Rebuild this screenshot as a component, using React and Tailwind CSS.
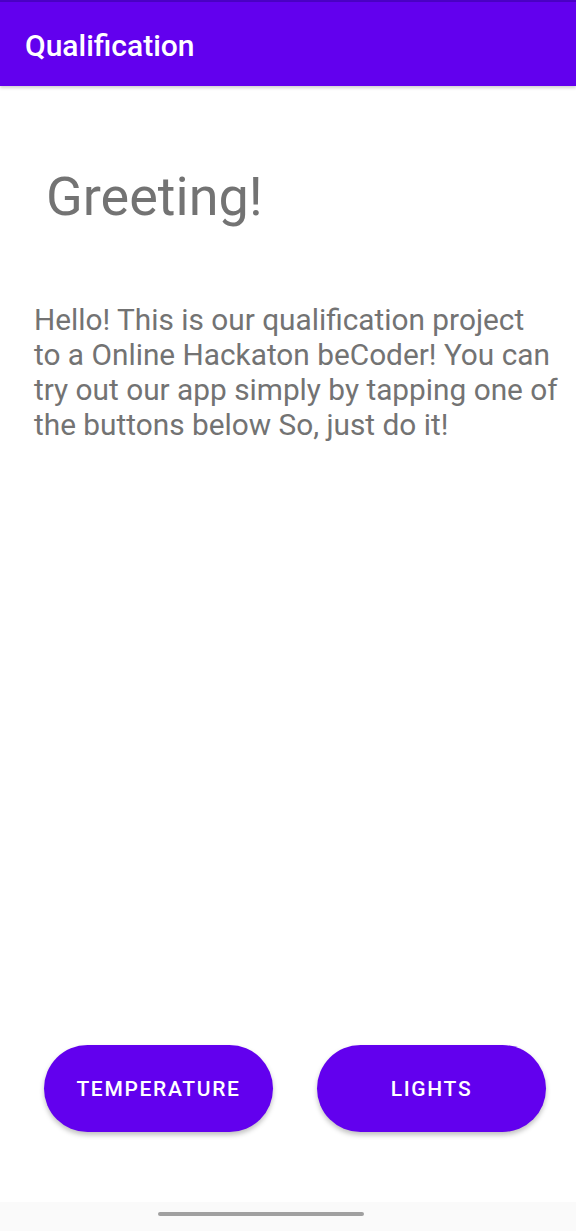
// Qualification app — greeting screen with two action buttons.

export default function App() {
  return (
    <div
      className="flex flex-col h-[1231px] w-full bg-white"
      style={{ fontFamily: 'Roboto, "Liberation Sans", sans-serif' }}
    >
      <div className="h-[2px] bg-[#4a00c4]" />
      <header className="h-[84px] bg-[#6200ee] flex items-center px-[25px] shadow-[0_2px_3px_rgba(0,0,0,0.18)] relative z-10">
        <h1 className="text-white text-[30px] font-medium leading-none mt-[3px]">Qualification</h1>
      </header>

      <main className="flex-1 flex flex-col">
        <h2 className="mt-[84px] ml-[46px] text-[54px] leading-none text-[#737373]">Greeting!</h2>
        <p className="mt-[78px] ml-[34px] text-[29.8px] leading-[35px] text-[#737373] whitespace-nowrap">
          Hello! This is our qualification project
          <br />
          to a Online Hackaton beCoder! You can
          <br />
          try out our app simply by tapping one of
          <br />
          the buttons below So, just do it!
        </p>

        <div className="flex-1" />

        <div className="flex justify-between pl-[44px] pr-[30px] mb-[70px]">
          <button className="w-[229px] h-[87px] rounded-full bg-[#6200ee] text-white text-[21px] font-medium tracking-[0.08em] pt-[3px] shadow-[0_3px_5px_rgba(0,0,0,0.25)]">
            TEMPERATURE
          </button>
          <button className="w-[229px] h-[87px] rounded-full bg-[#6200ee] text-white text-[21px] font-medium tracking-[0.08em] pt-[3px] shadow-[0_3px_5px_rgba(0,0,0,0.25)]">
            LIGHTS
          </button>
        </div>
      </main>

      <div className="h-[29px] bg-[#fafafa] pt-[10px] pl-[158px]">
        <div className="w-[206px] h-[4px] rounded-full bg-[#a0a0a0]" />
      </div>
    </div>
  )
}
